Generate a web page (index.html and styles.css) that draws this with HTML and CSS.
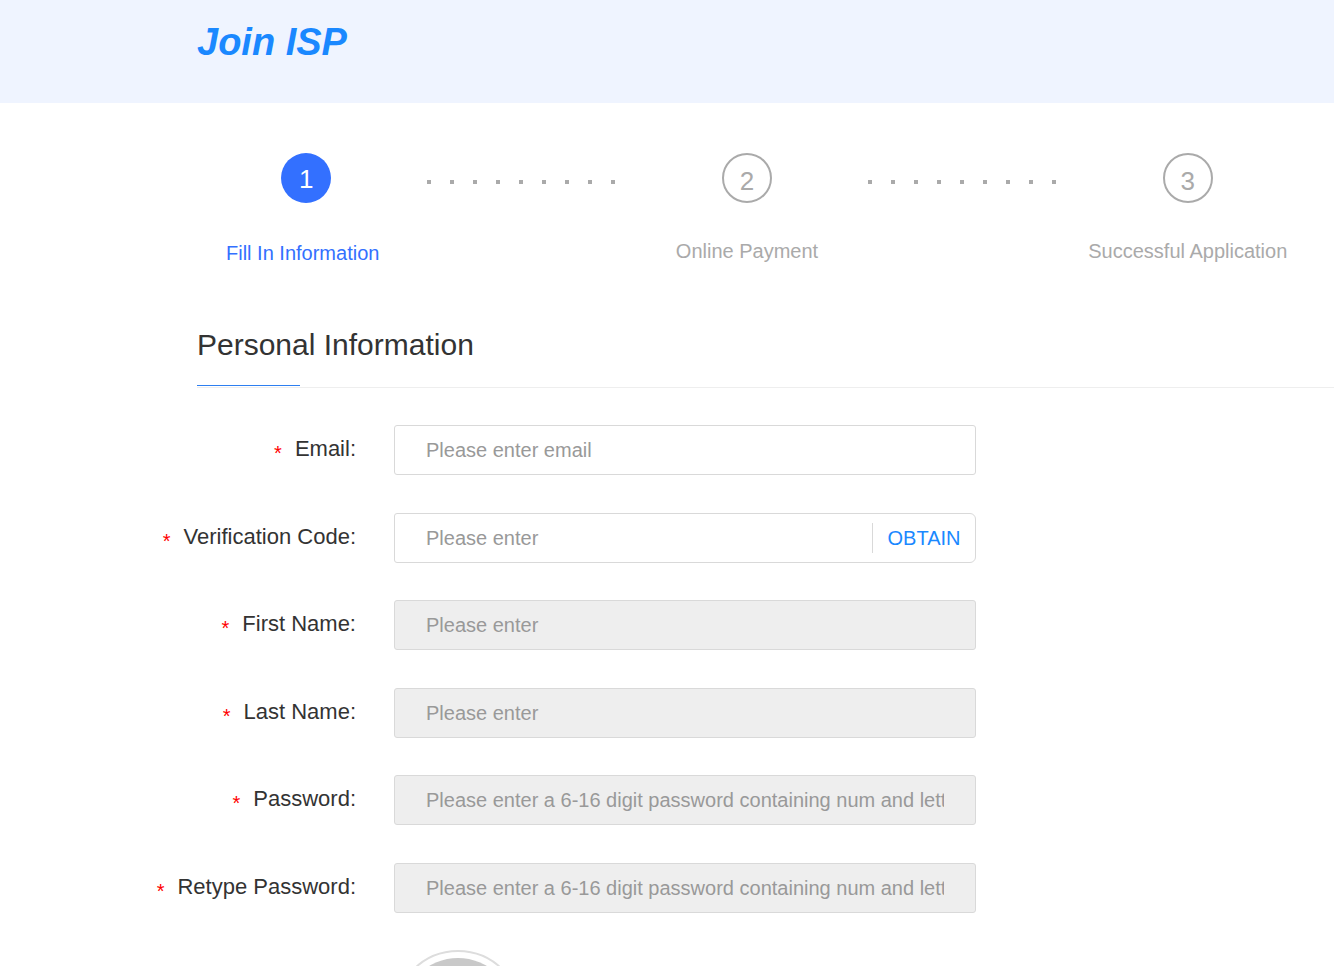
FILE: index.html
```html
<!DOCTYPE html>
<html lang="en">
<head>
    <meta charset="UTF-8">
    <meta name="viewport" content="width=device-width, initial-scale=1.0">
    <title>Join ISP</title>
    <link rel="stylesheet" href="styles.css">
</head>
<body>
    <header class="banner">
        <h1>Join ISP</h1>
    </header>

    <div class="steps">
        <div class="step active">
            <span class="step-num">1</span>
            <span class="step-name">Fill In Information</span>
        </div>
        <div class="dots"><i></i><i></i><i></i><i></i><i></i><i></i><i></i><i></i><i></i></div>
        <div class="step">
            <span class="step-num">2</span>
            <span class="step-name">Online Payment</span>
        </div>
        <div class="dots"><i></i><i></i><i></i><i></i><i></i><i></i><i></i><i></i><i></i></div>
        <div class="step">
            <span class="step-num">3</span>
            <span class="step-name">Successful Application</span>
        </div>
    </div>

    <h2 class="section-title">Personal Information</h2>

    <form class="join-form">
        <div class="row">
            <label for="email"><span class="required">*</span>Email:</label>
            <input class="field" type="email" id="email" placeholder="Please enter email">
        </div>
        <div class="row">
            <label for="code"><span class="required">*</span>Verification Code:</label>
            <div class="field code-field">
                <input type="text" id="code" placeholder="Please enter">
                <button type="button" class="obtain">OBTAIN</button>
            </div>
        </div>
        <div class="row">
            <label for="first-name"><span class="required">*</span>First Name:</label>
            <input class="field" type="text" id="first-name" placeholder="Please enter" disabled>
        </div>
        <div class="row">
            <label for="last-name"><span class="required">*</span>Last Name:</label>
            <input class="field" type="text" id="last-name" placeholder="Please enter" disabled>
        </div>
        <div class="row">
            <label for="password"><span class="required">*</span>Password:</label>
            <input class="field" type="password" id="password" placeholder="Please enter a 6-16 digit password containing num and letters" disabled>
        </div>
        <div class="row">
            <label for="password2"><span class="required">*</span>Retype Password:</label>
            <input class="field" type="password" id="password2" placeholder="Please enter a 6-16 digit password containing num and letters" disabled>
        </div>
        <div class="row">
            <div class="avatar"></div>
        </div>
    </form>
</body>
</html>
```

FILE: styles.css
```css
* { box-sizing: border-box; }
body { margin: 0; font-family: Arial, "Liberation Sans", sans-serif; font-size: 20px; color: #333; background: #fff; }

.banner { height: 103px; padding: 20px 0 0 197px; background: #eff4ff; }
.banner h1 { margin: 0; font-size: 38px; line-height: 44px; font-style: italic; color: #1a88ff; }

.steps { display: flex; padding: 50px 36px 0 196px; }
.step, .dots { width: 20%; }
.step { display: flex; flex-direction: column; align-items: center; color: #aaa; }
.step-num { width: 50px; height: 50px; border: 2px solid #aaa; border-radius: 50%; font-size: 26px; line-height: 52px; text-align: center; }
.step-name { margin-top: 36px; line-height: 24px; white-space: nowrap; }
.step.active { color: #3370ff; }
.step.active .step-num { border: 0; background: #3370ff; color: #fff; }
.step.active .step-name { margin-top: 38px; padding-right: 7px; }
.dots { display: flex; justify-content: space-between; padding: 27px 22px 0 11px; }
.dots i { width: 4px; height: 4px; background: #aaa; }

.section-title { position: relative; margin: 61px 0 37px 197px; padding-bottom: 23px; border-bottom: 1px solid #eee; font-size: 30px; font-weight: normal; line-height: 38px; }
.section-title::after { content: ""; position: absolute; left: 0; bottom: 1px; width: 103px; height: 1px; background: #2e7ff0; }

.row { display: flex; gap: 38px; margin-bottom: 38px; }
.row:nth-child(even) { margin-bottom: 37px; }
.row label { width: 356px; font-size: 22px; line-height: 48px; text-align: right; }
.required { margin-right: 13px; font-size: 20px; color: #f00; vertical-align: -4px; line-height: 1; }

.field { width: 582px; height: 50px; padding: 0 31px; border: 1px solid #d9d9d9; border-radius: 3px; background: #fff; font-family: inherit; font-size: 20px; }
.field:disabled { background: #eee; }
.code-field { display: flex; align-items: center; padding: 0; border-radius: 3px 6px 6px 3px; }
.code-field input { flex: 1; min-width: 0; height: 46px; padding: 0 31px; border: 0; background: none; font: inherit; }
.obtain { width: 103px; height: 30px; padding: 0; border: 0; border-left: 1px solid #d9d9d9; background: none; font: inherit; color: #1a88ff; cursor: pointer; }
input::placeholder { color: #999; opacity: 1; }

.avatar { width: 128px; height: 128px; margin-left: 394px; padding: 6px; border: 2px solid #ddd; border-radius: 50%; background: #c9c9c9 content-box; }
```
